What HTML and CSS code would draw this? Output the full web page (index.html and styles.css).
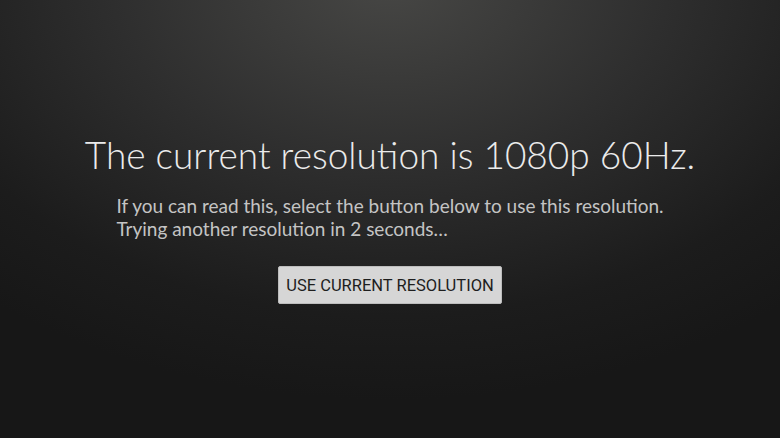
FILE: index.html
```html
<!DOCTYPE html>
<html>
<head>
<meta charset="utf-8">
<link rel="stylesheet" href="styles.css">
</head>
<body>
<main class="screen">
  <h1 class="title">The current resolution is 1080p 60Hz.</h1>
  <p class="message">If you can read this, select the button below to use this resolution.<br>Trying another resolution in 2 seconds…</p>
  <button class="use-btn">USE CURRENT RESOLUTION</button>
</main>
</body>
</html>
```

FILE: styles.css
```css
html, body {
  margin: 0;
  padding: 0;
  width: 780px;
  height: 438px;
  overflow: hidden;
}
body {
  background: radial-gradient(ellipse 620px 420px at 390px -20px, #474745 0%, #2e2e2e 45%, #1c1c1c 80%, #171717 100%);
  font-family: Lato, "Liberation Sans", sans-serif;
  color: #e8e8e8;
}
.screen {
  display: flex;
  flex-direction: column;
  align-items: center;
  padding-top: 132px;
}
.title {
  margin: 0;
  font-weight: 300;
  font-size: 37px;
  line-height: 46px;
  color: #ebebeb;
}
.message {
  margin: 16px 0 0;
  font-size: 19px;
  line-height: 23px;
  color: #c4c4c4;
  font-weight: 400;
  text-align: left;
}
.use-btn {
  margin-top: 26px;
  width: 224px;
  height: 38px;
  background: #d6d6d6;
  border: 1px solid #bdbdbd;
  border-radius: 2px;
  font-family: Roboto, sans-serif;
  font-size: 16.5px;
  color: #1e1e1e;
  padding: 0;
}
```
